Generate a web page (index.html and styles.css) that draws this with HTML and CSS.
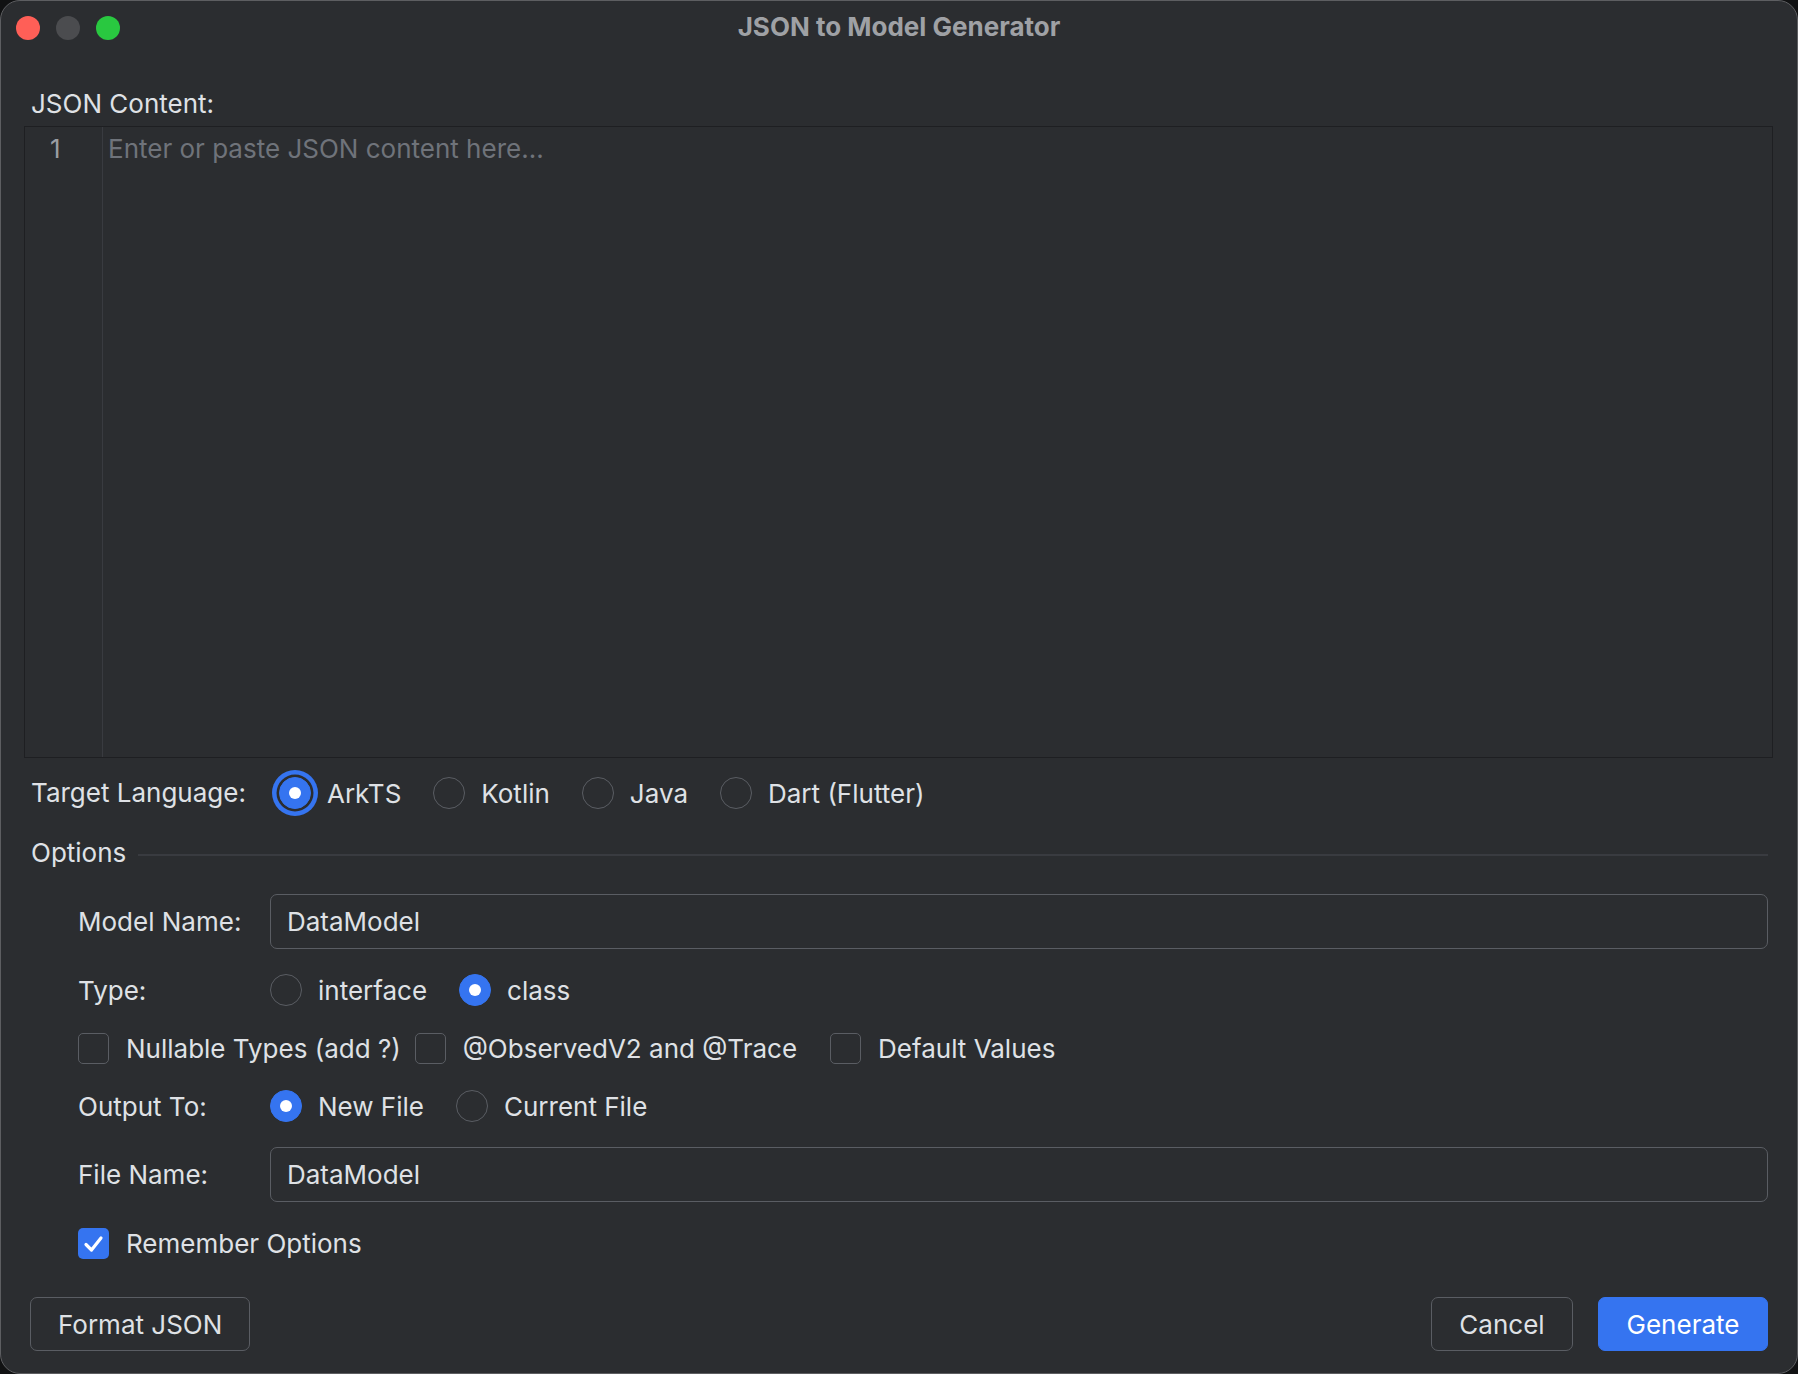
FILE: index.html
```html
<!DOCTYPE html>
<html lang="en">
<head>
    <meta charset="UTF-8">
    <meta name="viewport" content="width=device-width, initial-scale=1.0">
    <title>JSON to Model Generator</title>
    <link rel="stylesheet" href="styles.css">
</head>
<body>
    <div class="window">
        <!-- Title bar -->
        <header class="titlebar">
            <div class="lights">
                <span class="light close"></span>
                <span class="light min"></span>
                <span class="light max"></span>
            </div>
            <div class="title">JSON to Model Generator</div>
            <div></div>
        </header>

        <main class="content">
            <div class="label json-label">JSON Content:</div>

            <!-- JSON editor -->
            <div class="editor">
                <div class="gutter">1</div>
                <div class="code">Enter or paste JSON content here...</div>
            </div>

            <!-- Target language -->
            <div class="lang-row">
                <span class="label">Target Language:</span>
                <div class="radio-group">
                    <label class="radio-item"><span class="radio checked focused"></span>ArkTS</label>
                    <label class="radio-item"><span class="radio"></span>Kotlin</label>
                    <label class="radio-item"><span class="radio"></span>Java</label>
                    <label class="radio-item"><span class="radio"></span>Dart (Flutter)</label>
                </div>
            </div>

            <!-- Options -->
            <div class="section-title">
                <span class="label">Options</span>
                <span class="rule"></span>
            </div>

            <div class="options">
                <div class="opt-row field-row">
                    <span class="opt-label">Model Name:</span>
                    <div class="field">DataModel</div>
                </div>
                <div class="opt-row">
                    <span class="opt-label">Type:</span>
                    <div class="radio-group">
                        <label class="radio-item"><span class="radio"></span>interface</label>
                        <label class="radio-item"><span class="radio checked"></span>class</label>
                    </div>
                </div>
                <div class="check-row">
                    <label class="check-item"><span class="checkbox"></span>Nullable Types (add ?)</label>
                    <label class="check-item observed"><span class="checkbox"></span>@ObservedV2 and @Trace</label>
                    <label class="check-item"><span class="checkbox"></span>Default Values</label>
                </div>
                <div class="opt-row">
                    <span class="opt-label">Output To:</span>
                    <div class="radio-group">
                        <label class="radio-item"><span class="radio checked"></span>New File</label>
                        <label class="radio-item"><span class="radio"></span>Current File</label>
                    </div>
                </div>
                <div class="opt-row field-row">
                    <span class="opt-label">File Name:</span>
                    <div class="field">DataModel</div>
                </div>
                <div class="check-row">
                    <label class="check-item">
                        <span class="checkbox checked">
                            <svg width="31" height="31" viewBox="0 0 31 31"><path d="M8 16.5 L13.5 22 L23 10" fill="none" stroke="#fff" stroke-width="3.2" stroke-linecap="round" stroke-linejoin="round"/></svg>
                        </span>Remember Options
                    </label>
                </div>
            </div>

            <!-- Buttons -->
            <div class="actions">
                <button class="btn">Format JSON</button>
                <div class="actions-right">
                    <button class="btn cancel">Cancel</button>
                    <button class="btn primary">Generate</button>
                </div>
            </div>
        </main>
    </div>
</body>
</html>
```

FILE: styles.css
```css
* {
    box-sizing: border-box;
}

body {
    margin: 0;
    background-color: #111213;
    font-family: Inter, "Noto Sans", sans-serif;
    font-size: 26px;
    color: #dfe1e5;
}

.window {
    width: 1798px;
    height: 1374px;
    background-color: #2b2d30;
    border: 1px solid #5d5e61;
    border-radius: 20px;
    display: flex;
    flex-direction: column;
    overflow: hidden;
}

/* title bar */
.titlebar {
    height: 56px;
    display: grid;
    grid-template-columns: 1fr auto 1fr;
    align-items: center;
    padding: 0 15px;
    flex-shrink: 0;
}

.lights {
    display: flex;
    gap: 16px;
    margin-top: -2px;
}

.light {
    width: 24px;
    height: 24px;
    border-radius: 50%;
}

.light.close { background-color: #ff5f57; }
.light.min { background-color: #4b4c4f; }
.light.max { background-color: #29c840; }

.title {
    font-weight: 700;
    font-size: 26px;
    color: #9fa1a5;
    margin-top: -6px;
}

/* main */
.content {
    flex: 1;
    padding: 32px 29px 0 29px;
    display: flex;
    flex-direction: column;
}

.label {
    line-height: 30px;
    padding-left: 1px;
    white-space: nowrap;
}

.editor {
    margin: 7px -5px 0 -6px;
    height: 632px;
    border: 1.5px solid #1e1f22;
    display: flex;
    flex-shrink: 0;
}

.gutter {
    width: 78px;
    border-right: 1.5px solid #393b40;
    padding: 7px 0 0 25px;
    line-height: 30px;
    color: #9a9da3;
}

.code {
    padding: 7px 0 0 5px;
    line-height: 30px;
    color: #6f737a;
}

.lang-row {
    margin-top: 12px;
    height: 46px;
    display: flex;
    align-items: center;
    gap: 33px;
}

.radio-group {
    display: flex;
    align-items: center;
    gap: 32px;
}

.radio-item {
    display: flex;
    align-items: center;
    gap: 16px;
    white-space: nowrap;
}

.radio {
    width: 32px;
    height: 32px;
    border-radius: 50%;
    border: 1.5px solid #5a5d63;
    display: flex;
    align-items: center;
    justify-content: center;
    flex-shrink: 0;
}

.radio.checked {
    background-color: #3574f0;
    border-color: #3574f0;
}

.radio.checked::after {
    content: "";
    width: 12px;
    height: 12px;
    border-radius: 50%;
    background-color: #fff;
}

.radio.focused {
    box-shadow: 0 0 0 2.5px #2b2d30, 0 0 0 7px #3574f0;
}

.section-title {
    margin-top: 22px;
    display: flex;
    align-items: center;
    gap: 12px;
}

.rule {
    flex: 1;
    height: 2px;
    background-color: #393b40;
    margin-top: 3px;
}

/* options panel */
.options {
    margin-top: 26px;
    padding-left: 48px;
    display: flex;
    flex-direction: column;
    gap: 24px;
}

.opt-row {
    display: grid;
    grid-template-columns: 192px 1fr;
    align-items: center;
    height: 34px;
}

.opt-row.field-row {
    height: 55px;
}

.opt-label {
    white-space: nowrap;
}

.field {
    height: 55px;
    border: 1.5px solid #5a5d63;
    border-radius: 7px;
    padding-left: 16px;
    display: flex;
    align-items: center;
}

.check-row {
    height: 34px;
    display: flex;
    align-items: center;
    gap: 14px;
}

.check-item {
    display: flex;
    align-items: center;
    gap: 17px;
    white-space: nowrap;
}

.check-item.observed {
    margin-right: 19px;
}

.checkbox {
    width: 31px;
    height: 31px;
    border: 1.5px solid #5a5d63;
    border-radius: 5px;
    flex-shrink: 0;
    display: flex;
}

.checkbox.checked {
    background-color: #3574f0;
    border: none;
}

/* buttons */
.actions {
    margin-top: 37px;
    display: flex;
    justify-content: space-between;
}

.actions-right {
    display: flex;
    gap: 25px;
}

.btn {
    height: 54px;
    padding: 0 27px;
    font-family: inherit;
    font-size: 26px;
    color: #dfe1e5;
    background-color: transparent;
    border: 1.5px solid #5a5d63;
    border-radius: 7px;
}

.btn.cancel {
    width: 142px;
}

.btn.primary {
    width: 170px;
    background-color: #3574f0;
    border-color: #3574f0;
    color: #fff;
}
```
